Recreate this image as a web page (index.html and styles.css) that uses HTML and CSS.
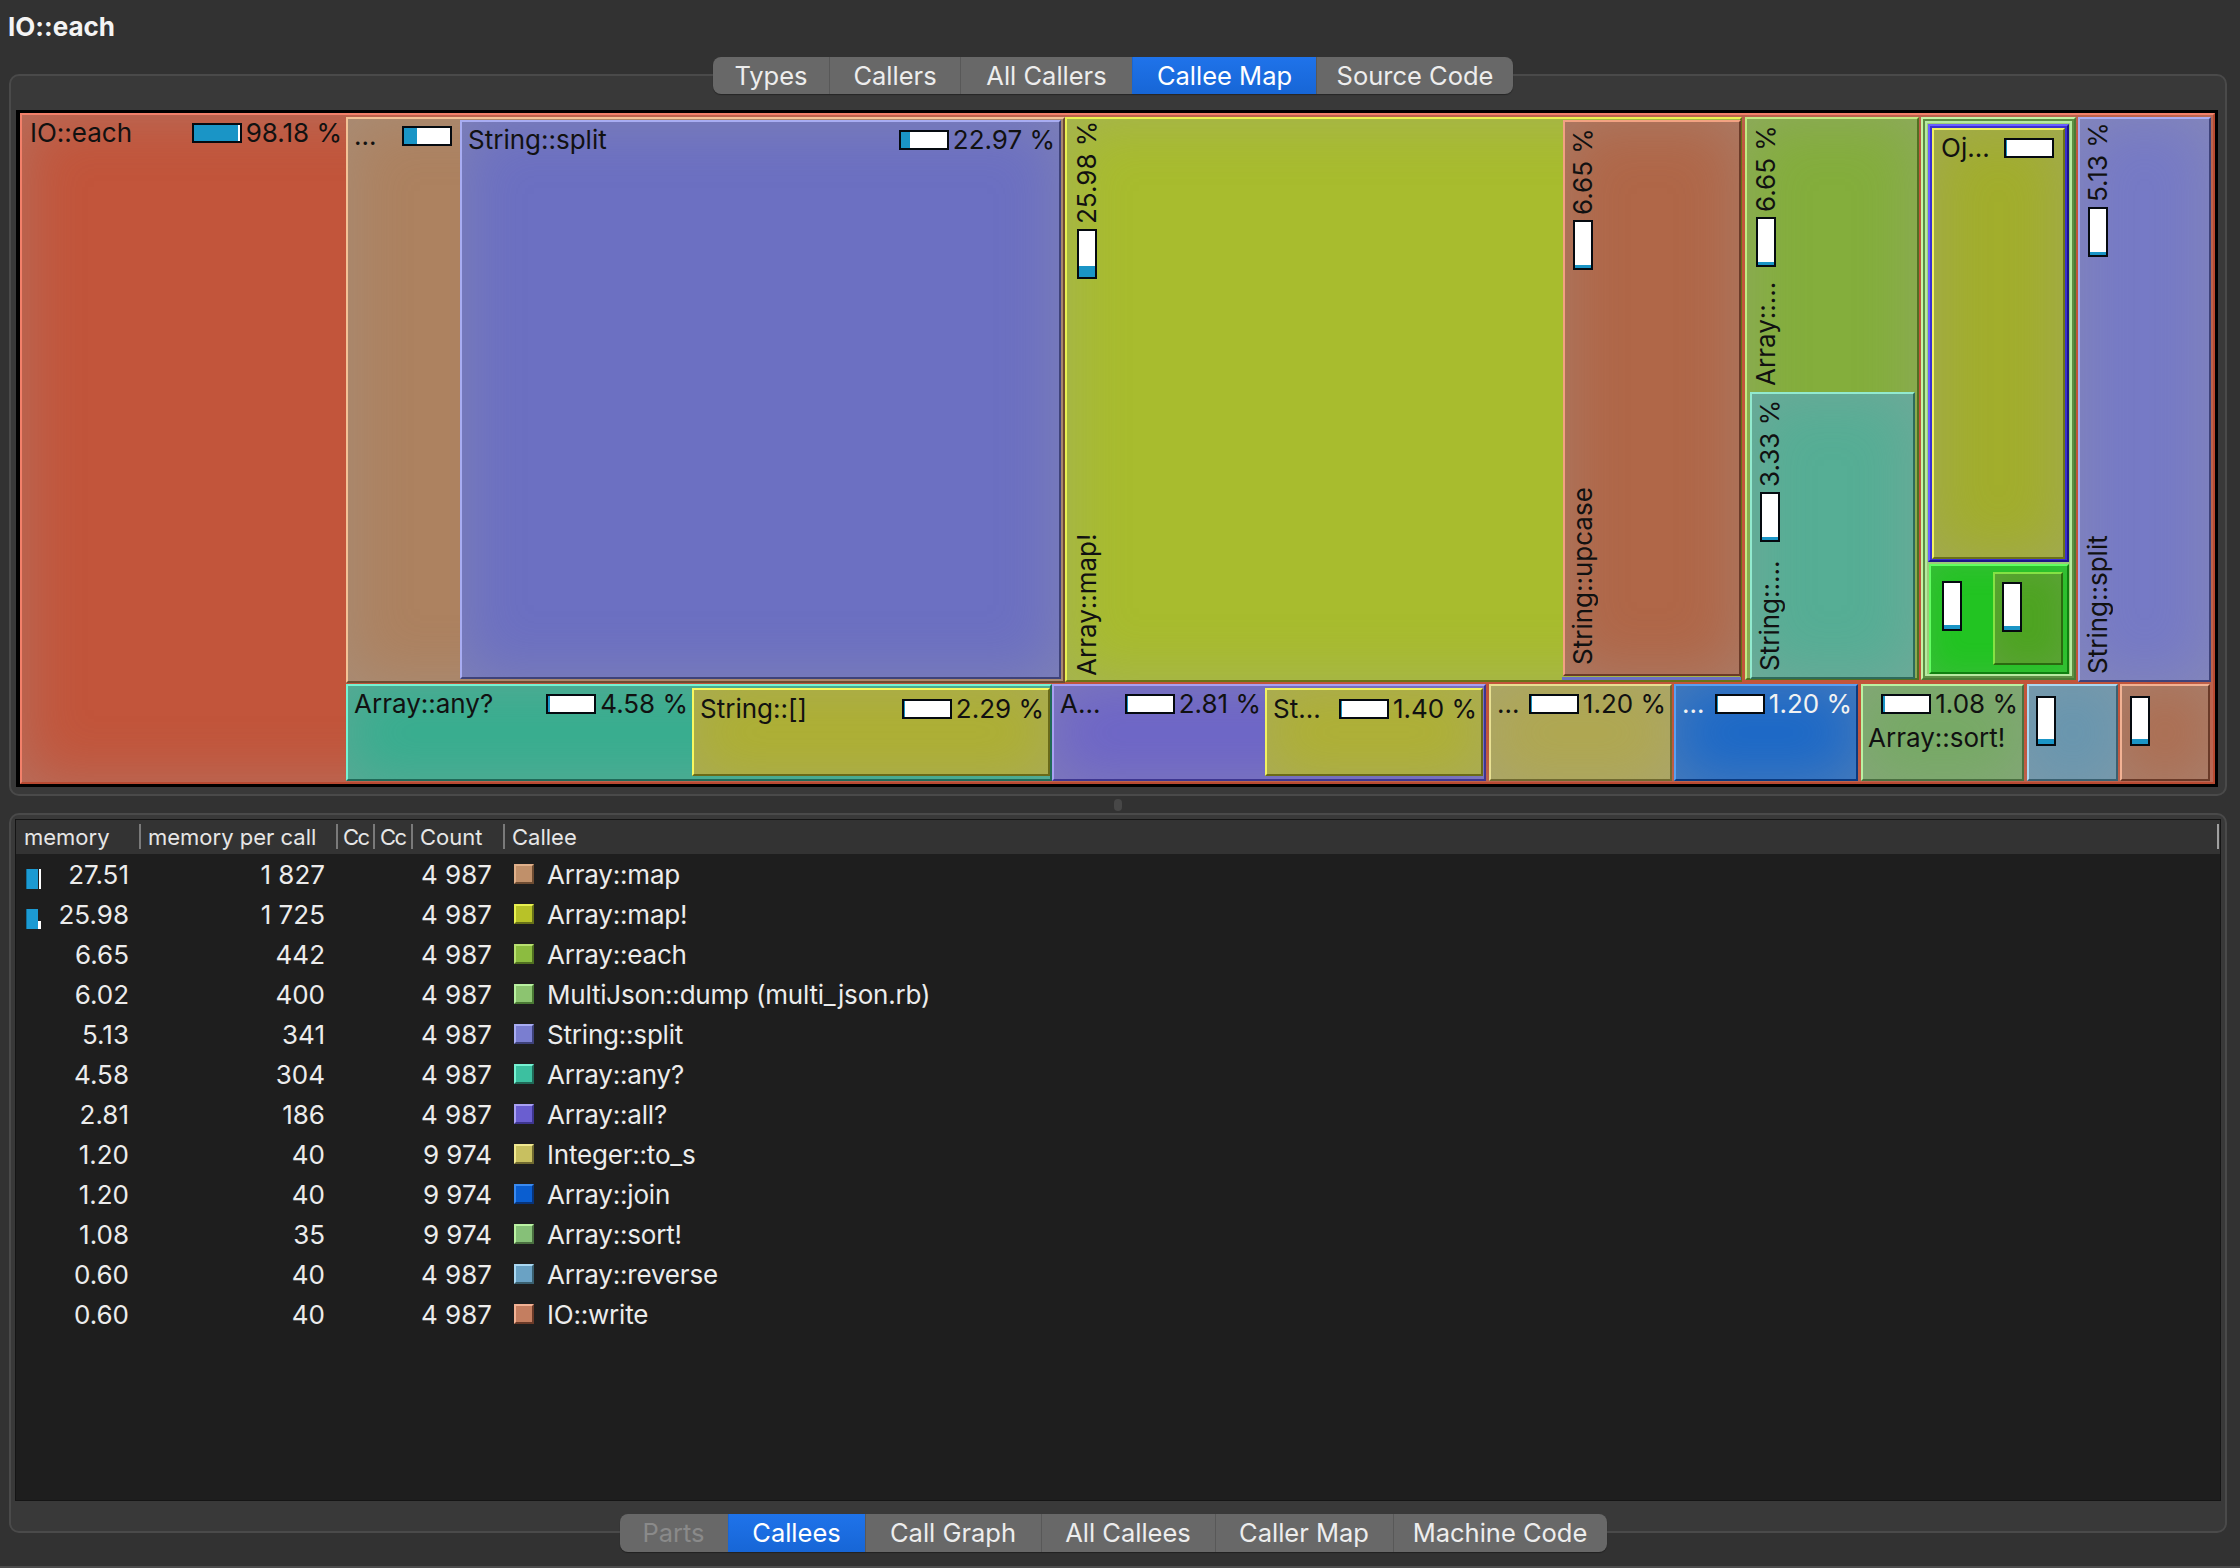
FILE: index.html
```html
<!DOCTYPE html>
<html>
<head>
<meta charset="utf-8">
<link rel="stylesheet" href="styles.css">
</head>
<body>
<div class="title">IO::each</div>

<div class="upper">
  <div class="tabbar">
    <div class="tabs">
      <span class="tab t-types">Types</span>
      <span class="tab t-callers">Callers</span>
      <span class="tab t-allcallers">All Callers</span>
      <span class="tab sel t-calleemap">Callee Map</span>
      <span class="tab t-source">Source Code</span>
    </div>
  </div>
  <div class="frame upper-frame">
    <div class="treemap">
      <div class="node ioeach" style="left:4px;top:3px;width:2195px;height:671px">
        <div class="hlab hl-wide" style="top:3px;width:324px"><span class="name">IO::each</span><span class="bar"><i style="width:97%"></i></span><span class="pct">98.18 %</span></div>
      </div>
      <div class="node amap" style="left:330px;top:7px;width:719px;height:566px">
        <div class="hlab" style="top:2px;width:112px;padding-right:8px"><span class="name">...</span><span class="bar"><i style="width:28%"></i></span></div>
      </div>
      <div class="node ssplit" style="left:444px;top:10px;width:601px;height:559px">
        <div class="hlab" style="top:3px;width:597px"><span class="name">String::split</span><span class="bar"><i style="width:20%"></i></span><span class="pct">22.97 %</span></div>
      </div>
      <div class="node anyq" style="left:330px;top:574px;width:706px;height:97px">
        <div class="hlab" style="top:3px;width:344px"><span class="name">Array::any?</span><span class="bar"><i style="width:3%"></i></span><span class="pct">4.58 %</span></div>
      </div>
      <div class="node sidx" style="left:676px;top:578px;width:358px;height:88px">
        <div class="hlab" style="top:4px;width:354px"><span class="name">String::[]</span><span class="bar"><i style="width:3%"></i></span><span class="pct">2.29 %</span></div>
      </div>
      <div class="node allq" style="left:1036px;top:574px;width:434px;height:97px">
        <div class="hlab" style="top:3px;width:211px"><span class="name">A...</span><span class="bar"><i style="width:3%"></i></span><span class="pct">2.81 %</span></div>
      </div>
      <div class="node st" style="left:1249px;top:578px;width:218px;height:88px">
        <div class="hlab" style="top:4px;width:214px"><span class="name">St...</span><span class="bar"><i style="width:3%"></i></span><span class="pct">1.40 %</span></div>
      </div>
      <div class="node tos" style="left:1473px;top:574px;width:183px;height:97px">
        <div class="hlab" style="top:3px;width:179px"><span class="name">...</span><span class="bar"><i style="width:3%"></i></span><span class="pct">1.20 %</span></div>
      </div>
      <div class="node join" style="left:1658px;top:574px;width:184px;height:97px">
        <div class="hlab light" style="top:3px;width:180px"><span class="name">...</span><span class="bar"><i style="width:3%"></i></span><span class="pct">1.20 %</span></div>
      </div>
      <div class="node sort" style="left:1845px;top:574px;width:163px;height:97px">
        <div class="hlab" style="top:3px;width:159px"><span class="name"></span><span class="bar"><i style="width:3%"></i></span><span class="pct">1.08 %</span></div>
        <div class="hlab" style="top:37px;width:159px;padding-left:5px"><span class="name">Array::sort!</span></div>
      </div>
      <div class="node rev" style="left:2011px;top:574px;width:91px;height:97px">
        <span class="vbar solo" style="left:7px;top:10px"><i style="height:10%"></i></span>
      </div>
      <div class="node write" style="left:2104px;top:574px;width:90px;height:97px">
        <span class="vbar solo" style="left:8px;top:10px"><i style="height:10%"></i></span>
      </div>
      <div class="node mapb" style="left:1049px;top:7px;width:677px;height:565px">
        <div class="vlab" style="left:5px;top:2px;height:555px"><span class="name">Array::map!</span><span class="vbar"><i style="height:25%"></i></span><span class="pct">25.98 %</span></div>
      </div>
      <div class="node upcase" style="left:1547px;top:10px;width:178px;height:556px">
        <div class="vlab" style="left:3px;top:6px;height:537px"><span class="name">String::upcase</span><span class="vbar"><i style="height:6%"></i></span><span class="pct">6.65 %</span></div>
      </div>
      <div class="node ssplit thin" style="left:1546px;top:567px;width:179px;height:3px"></div>
      <div class="node each" style="left:1729px;top:7px;width:174px;height:563px">
        <div class="vlab" style="left:4px;top:6px;height:261px"><span class="name">Array::...</span><span class="vbar"><i style="height:6%"></i></span><span class="pct">6.65 %</span></div>
      </div>
      <div class="node sdots" style="left:1734px;top:282px;width:165px;height:287px">
        <div class="vlab" style="left:3px;top:6px;height:271px"><span class="name">String::...</span><span class="vbar"><i style="height:6%"></i></span><span class="pct">3.33 %</span></div>
      </div>
      <div class="node mj" style="left:1905px;top:7px;width:155px;height:563px"></div>
      <div class="node ojo" style="left:1912px;top:14px;width:141px;height:438px"></div>
      <div class="node oj" style="left:1916px;top:18px;width:133px;height:431px">
        <div class="hlab" style="top:3px;width:129px;padding-left:7px;padding-right:9px"><span class="name">Oj...</span><span class="bar"><i style="width:3%"></i></span></div>
      </div>
      <div class="node gr" style="left:1913px;top:454px;width:140px;height:110px">
        <span class="vbar solo" style="left:11px;top:15px"><i style="height:8%"></i></span>
      </div>
      <div class="node gri" style="left:1977px;top:462px;width:70px;height:93px">
        <span class="vbar solo" style="left:7px;top:8px"><i style="height:8%"></i></span>
      </div>
      <div class="node ssplit2" style="left:2062px;top:7px;width:133px;height:565px">
        <div class="vlab" style="left:3px;top:3px;height:552px"><span class="name">String::split</span><span class="vbar"><i style="height:6%"></i></span><span class="pct">5.13 %</span></div>
      </div>
    </div>
  </div>
</div>

<div class="splitter"><span class="handle"></span></div>

<div class="lower">
  <div class="frame lower-frame">
    <div class="table">
      <div class="thead">
        <div class="th">memory</div>
        <div class="th">memory per call</div>
        <div class="th th-narrow">Cc</div>
        <div class="th th-narrow">Cc</div>
        <div class="th">Count</div>
        <div class="th last">Callee</div>
      </div>
      <div class="row"><div class="c1"><span class="mbar full"></span><span>27.51</span></div><div class="num">1 827</div><div></div><div></div><div class="num">4 987</div><div class="callee"><span class="sw s-map"></span>Array::map</div></div>
      <div class="row"><div class="c1"><span class="mbar part"></span><span>25.98</span></div><div class="num">1 725</div><div></div><div></div><div class="num">4 987</div><div class="callee"><span class="sw s-mapb"></span>Array::map!</div></div>
      <div class="row"><div class="c1"><span>6.65</span></div><div class="num">442</div><div></div><div></div><div class="num">4 987</div><div class="callee"><span class="sw s-each"></span>Array::each</div></div>
      <div class="row"><div class="c1"><span>6.02</span></div><div class="num">400</div><div></div><div></div><div class="num">4 987</div><div class="callee"><span class="sw s-mj"></span>MultiJson::dump (multi_json.rb)</div></div>
      <div class="row"><div class="c1"><span>5.13</span></div><div class="num">341</div><div></div><div></div><div class="num">4 987</div><div class="callee"><span class="sw s-split"></span>String::split</div></div>
      <div class="row"><div class="c1"><span>4.58</span></div><div class="num">304</div><div></div><div></div><div class="num">4 987</div><div class="callee"><span class="sw s-any"></span>Array::any?</div></div>
      <div class="row"><div class="c1"><span>2.81</span></div><div class="num">186</div><div></div><div></div><div class="num">4 987</div><div class="callee"><span class="sw s-all"></span>Array::all?</div></div>
      <div class="row"><div class="c1"><span>1.20</span></div><div class="num">40</div><div></div><div></div><div class="num">9 974</div><div class="callee"><span class="sw s-tos"></span>Integer::to_s</div></div>
      <div class="row"><div class="c1"><span>1.20</span></div><div class="num">40</div><div></div><div></div><div class="num">9 974</div><div class="callee"><span class="sw s-join"></span>Array::join</div></div>
      <div class="row"><div class="c1"><span>1.08</span></div><div class="num">35</div><div></div><div></div><div class="num">9 974</div><div class="callee"><span class="sw s-sort"></span>Array::sort!</div></div>
      <div class="row"><div class="c1"><span>0.60</span></div><div class="num">40</div><div></div><div></div><div class="num">4 987</div><div class="callee"><span class="sw s-rev"></span>Array::reverse</div></div>
      <div class="row"><div class="c1"><span>0.60</span></div><div class="num">40</div><div></div><div></div><div class="num">4 987</div><div class="callee"><span class="sw s-write"></span>IO::write</div></div>
    </div>
  </div>
  <div class="tabbar bottom">
    <div class="tabs">
      <span class="tab dis b-parts">Parts</span>
      <span class="tab sel b-callees">Callees</span>
      <span class="tab b-graph">Call Graph</span>
      <span class="tab b-allcallees">All Callees</span>
      <span class="tab b-callermap">Caller Map</span>
      <span class="tab b-machine">Machine Code</span>
    </div>
  </div>
  <div class="winline"></div>
</div>
</body>
</html>
```

FILE: styles.css
```css
* { box-sizing: border-box; }
html, body { margin: 0; padding: 0; }
body {
  width: 2240px;
  height: 1568px;
  background: #323232;
  font-family: Inter, "Noto Sans", sans-serif;
  color: #e8e8e8;
  overflow: hidden;
}

.title {
  height: 57px;
  padding: 8px 0 0 8px;
  font-weight: 700;
  font-size: 26px;
  line-height: 38px;
  color: #f4f4f4;
}

/* tab bars */
.tabbar {
  width: 2226px;
  display: flex;
  justify-content: center;
  position: relative;
  z-index: 2;
}
.tabs {
  display: flex;
  height: 37px;
  background: #686868;
  border-radius: 8px;
  overflow: hidden;
  box-shadow: 0 1px 1px rgba(0,0,0,.35);
}
.tab {
  font-size: 25.5px;
  line-height: 37px;
  text-align: center;
  color: #ededed;
  border-left: 1px solid #585858;
  white-space: nowrap;
}
.tab:first-child { border-left: none; }
.tab.sel {
  background: linear-gradient(#1f73ea, #1766d6);
  color: #fff;
  border-left-color: #1766d6;
}
.tab.dis { color: #8a8a8a; }
.t-types { width: 116px; }
.t-callers { width: 131px; }
.t-allcallers { width: 172px; }
.t-calleemap { width: 184px; }
.t-source { width: 197px; }

.bottom { margin-top: -19px; }
.bottom .tabs { height: 38px; }
.bottom .tab { line-height: 38px; }
.b-parts { width: 108px; }
.b-callees { width: 137px; }
.b-graph { width: 176px; }
.b-allcallees { width: 174px; }
.b-callermap { width: 178px; }
.b-machine { width: 214px; }

/* frames */
.frame {
  margin-left: 9px;
  width: 2218px;
  border: 2px solid #4a4a4a;
  border-radius: 10px;
  background: #393939;
}
.upper-frame {
  margin-top: -20px;
  height: 722px;
  padding: 34px 7px 7px 5px;
}
.lower-frame {
  height: 720px;
  padding: 4px 4px 30px 4px;
}
.splitter {
  height: 17px;
  width: 2236px;
  display: flex;
  justify-content: center;
  align-items: center;
}
.handle {
  width: 8px;
  height: 12px;
  border-radius: 4px;
  background: #474747;
}
.winline {
  margin-top: 14px;
  height: 2px;
  background: #4c4c4c;
}

/* treemap */
.treemap {
  position: relative;
  width: 2202px;
  height: 677px;
  background: #000;
  overflow: hidden;
}
.node {
  position: absolute;
  border: 2px solid;
  border-color: var(--hi) var(--lo) var(--lo) var(--hi);
  background: var(--c);
  box-shadow: inset 0 0 60px rgba(160,160,160,.38);
}
.node.thin { border: none; box-shadow: none; }

.ioeach  { --c:#c2553b; --hi:#f2806a; --lo:#b84a32; }
.amap    { --c:#ad8260; --hi:#f2c296; --lo:#6e4c32; }
.ssplit  { --c:#6c70c2; --hi:#a8acf2; --lo:#3e427a; }
.anyq    { --c:#36ae8f; --hi:#76f2d2; --lo:#206a58; }
.sidx    { --c:#aeb030; --hi:#f8f860; --lo:#6a6a18; }
.allq    { --c:#6d65c8; --hi:#a8a0f2; --lo:#3e3690; }
.st      { --c:#afb132; --hi:#f2f262; --lo:#6a6a18; }
.tos     { --c:#b0a850; --hi:#e8e092; --lo:#706a30; }
.join    { --c:#1a68c8; --hi:#5aa0f2; --lo:#0a3a80; }
.sort    { --c:#76aa64; --hi:#baf2a2; --lo:#4a7040; }
.rev     { --c:#6696b0; --hi:#aad8f2; --lo:#3a6070; }
.write   { --c:#ad6d50; --hi:#f2b294; --lo:#6a3a28; }
.mapb    { --c:#a8bc2e; --hi:#eaf252; --lo:#687218; }
.upcase  { --c:#b06748; --hi:#f2a282; --lo:#6a3a28; }
.each    { --c:#84ae3c; --hi:#c2ea82; --lo:#507020; }
.sdots   { --c:#56ae95; --hi:#92eacf; --lo:#2e6a5a; }
.mj      { --c:#9ccc78; --hi:#c4f4a4; --lo:#4a7a34; box-shadow: inset 0 0 0 2px #5e8e44, inset 0 0 0 4px #b6eaa0; }
.ojo     { --c:#3a30d0; --hi:#6a60ff; --lo:#1c1488; box-shadow: none; }
.oj      { --c:#a2ae2c; --hi:#f2f262; --lo:#6a7018; }
.gr      { --c:#22c422; --hi:#62ff62; --lo:#108010; box-shadow: inset 0 0 30px rgba(160,160,160,.2); }
.gri     { --c:#4ea422; --hi:#84e244; --lo:#2a6a10; box-shadow: inset 0 0 30px rgba(160,160,160,.2); }
.ssplit2 { --c:#767ac6; --hi:#a8acf2; --lo:#3e427a; }

.hlab {
  position: absolute;
  left: 0;
  height: 30px;
  display: flex;
  align-items: center;
  gap: 4px;
  padding: 0 4px 0 6px;
  font-size: 26px;
  line-height: 30px;
  white-space: nowrap;
  color: #111;
}
.hl-wide { padding-left: 8px; }
.hlab .name { margin-inline-end: auto; }
.hlab.light { color: #f2f2f2; }

.vlab {
  position: absolute;
  width: 30px;
  writing-mode: vertical-rl;
  transform: rotate(180deg);
  display: flex;
  align-items: center;
  gap: 5px;
  font-size: 26px;
  line-height: 30px;
  white-space: nowrap;
  color: #111;
}
.vlab .name { margin-inline-end: auto; }

.bar {
  position: relative;
  display: inline-block;
  width: 50px;
  height: 20px;
  border: 2px solid #050a10;
  background: #fff;
  flex: none;
}
.bar i {
  position: absolute;
  left: 0;
  top: 0;
  bottom: 0;
  background: #1a95c6;
}
.vbar {
  position: relative;
  display: inline-block;
  width: 20px;
  height: 50px;
  border: 2px solid #050a10;
  background: #fff;
  flex: none;
}
.vbar i {
  position: absolute;
  left: 0;
  right: 0;
  top: 0;
  background: #1a95c6;
}
.vbar.solo { position: absolute; }
.vbar.solo i { top: auto; bottom: 0; }

/* table */
.table {
  height: 682px;
  background: #1e1e1e;
  border: 1px solid #151515;
}
.thead, .row {
  display: grid;
  grid-template-columns: 123px 197px 37px 38px 92px 1fr;
}
.thead {
  height: 34px;
  background: #333;
  font-size: 22px;
  color: #e6e6e6;
}
.th {
  position: relative;
  padding-left: 9px;
  line-height: 34px;
  white-space: nowrap;
  overflow: hidden;
}
.th:first-child { padding-left: 8px; }
.th-narrow {
  padding-left: 7px;
  letter-spacing: -1.5px;
}
.th + .th::before {
  content: "";
  position: absolute;
  left: 0;
  top: 4px;
  width: 2px;
  height: 25px;
  background: #7a7a7a;
}
.th.last::after {
  content: "";
  position: absolute;
  right: 1px;
  top: 4px;
  width: 2px;
  height: 25px;
  background: #a0a0a0;
}
.row {
  height: 40px;
  align-items: center;
  font-size: 26px;
  color: #ececec;
}
.c1 {
  display: flex;
  align-items: center;
  justify-content: flex-end;
  padding: 0 10px;
  position: relative;
}
.num { text-align: right; padding-right: 11px; }
.mbar {
  position: absolute;
  left: 10px;
  top: 10px;
  width: 15px;
  height: 20px;
}
.mbar.full {
  background:
    linear-gradient(to right, #0f6f9a 0 1px, #1c9ad2 1px 12px, transparent 12px 13px, #fff 13px 15px);
}
.mbar.part {
  background:
    linear-gradient(to bottom, transparent 0 12px, #fff 12px) right 0 top 0 / 3px 20px no-repeat,
    linear-gradient(to right, #0f6f9a 0 1px, #1c9ad2 1px 12px, transparent 12px);
}
.callee {
  display: flex;
  align-items: center;
  padding-left: 11px;
  white-space: nowrap;
  letter-spacing: -0.2px;
}
.sw {
  width: 20px;
  height: 20px;
  margin-right: 13px;
  border: 2px solid;
  border-color: var(--hi) var(--lo) var(--lo) var(--hi);
  background: var(--c);
}
.s-map   { --c:#c0906a; --hi:#e0b08a; --lo:#6e4c32; }
.s-mapb  { --c:#b8c228; --hi:#e8f050; --lo:#687218; }
.s-each  { --c:#8cbc40; --hi:#b8e070; --lo:#507020; }
.s-mj    { --c:#8cc470; --hi:#b8f0a0; --lo:#4a7a34; }
.s-split { --c:#7a7ed0; --hi:#a8acf2; --lo:#3e427a; }
.s-any   { --c:#3cc0a0; --hi:#76f2d2; --lo:#206a58; }
.s-all   { --c:#6a5ed0; --hi:#a8a0f2; --lo:#3e3690; }
.s-tos   { --c:#c8c060; --hi:#f0e890; --lo:#706a30; }
.s-join  { --c:#0a5ed0; --hi:#3a8af0; --lo:#08347a; }
.s-sort  { --c:#86c078; --hi:#baf2a2; --lo:#4a7040; }
.s-rev   { --c:#6aa2c4; --hi:#aad8f2; --lo:#3a6070; }
.s-write { --c:#c47e60; --hi:#f2b294; --lo:#6a3a28; }
```
